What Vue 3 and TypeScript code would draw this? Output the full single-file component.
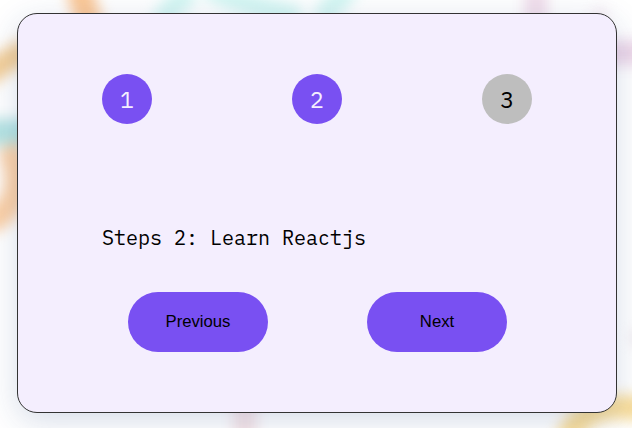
<script setup lang="ts">
import { ref } from 'vue'

const messages: string[] = ['Learn HTML', 'Learn Reactjs', 'Build projects']
const step = ref<number>(2)

function previous(): void {
  if (step.value > 1) step.value--
}

function next(): void {
  if (step.value < messages.length) step.value++
}
</script>

<template>
  <main class="page">
    <svg class="backdrop" viewBox="0 0 632 428" aria-hidden="true">
      <defs>
        <filter id="soft" x="-100" y="-100" width="832" height="628" filterUnits="userSpaceOnUse" color-interpolation-filters="sRGB">
          <feGaussianBlur stdDeviation="7" />
        </filter>
      </defs>
      <g fill="none" filter="url(#soft)">
        <path d="M-20 78Q0 66 28 48" stroke="#f3cd95" stroke-width="23" />
        <path d="M-20 132H35" stroke="#b4e3e2" stroke-width="26" />
        <path d="M8 146Q24 178 12 202Q4 216 -14 222" stroke="#fbcfa4" stroke-width="25" />
        <path d="M79 -20Q80 2 92 26" stroke="#fbc795" stroke-width="26" />
        <path d="M192 -8Q174 2 160 24M208 -12Q250 8 300 17M350 -14Q337 2 320 20" stroke="#d3f6f2" stroke-width="22" />
        <path d="M536 -20V24" stroke="#f0dcea" stroke-width="22" />
        <path d="M600 53H655" stroke="#edd6e8" stroke-width="24" />
        <path d="M245 402V450" stroke="#f5e2e5" stroke-width="22" />
        <path d="M564 450Q574 411 609 408Q630 405 655 412" stroke="#f9dd99" stroke-width="24" />
        <circle cx="600" cy="15" r="8" fill="#f5e9f1" />
        <circle cx="640" cy="338" r="9" fill="#ece5ea" />
      </g>
    </svg>
    <section class="card">
      <div class="numbers">
        <div v-for="n in 3" :key="n" class="number" :class="{ active: step >= n }">{{ n }}</div>
      </div>
      <p class="message">Steps {{ step }}: {{ messages[step - 1] }}</p>
      <div class="buttons">
        <button type="button" @click="previous">Previous</button>
        <button type="button" @click="next">Next</button>
      </div>
    </section>
  </main>
</template>

<style>
body {
  margin: 0;
  overflow: hidden;
}
</style>

<style scoped>
.page {
  position: relative;
  box-sizing: border-box;
  width: 632px;
  height: 428px;
  padding: 13px 15px 15px 17px;
  overflow: hidden;
  background: #fff;
}

.backdrop {
  position: absolute;
  inset: 0;
  width: 632px;
  height: 428px;
}

.card {
  position: relative;
  box-sizing: border-box;
  width: 600px;
  height: 400px;
  padding: 60px 84px;
  border: 1px solid #333;
  border-radius: 20px;
  background: #f4eefe;
  box-shadow: 0 8px 32px rgba(31, 65, 135, 0.18);
  color: #000;
  font-family: "IBM Plex Mono", "Liberation Mono", monospace;
}

.numbers {
  display: flex;
  justify-content: space-between;
}

.number {
  display: flex;
  align-items: center;
  justify-content: center;
  box-sizing: border-box;
  width: 50px;
  height: 50px;
  border-radius: 50%;
  background: #bebebe;
  font-size: 23px;
  line-height: 30px;
}

.number.active {
  background: #7950f2;
  color: #f4eefe;
}

.message {
  margin: 101px 0 0;
  font-size: 20px;
  line-height: 26px;
  white-space: nowrap;
}

.buttons {
  display: flex;
  justify-content: space-between;
  margin-top: 41px;
  padding: 0 25px 0 26px;
}

button {
  width: 140px;
  height: 60px;
  padding: 0;
  border: 0;
  border-radius: 30px;
  background: #7950f2;
  color: #000;
  font: 16.7px/20px "Liberation Sans", Arial, sans-serif;
  cursor: pointer;
}
</style>
